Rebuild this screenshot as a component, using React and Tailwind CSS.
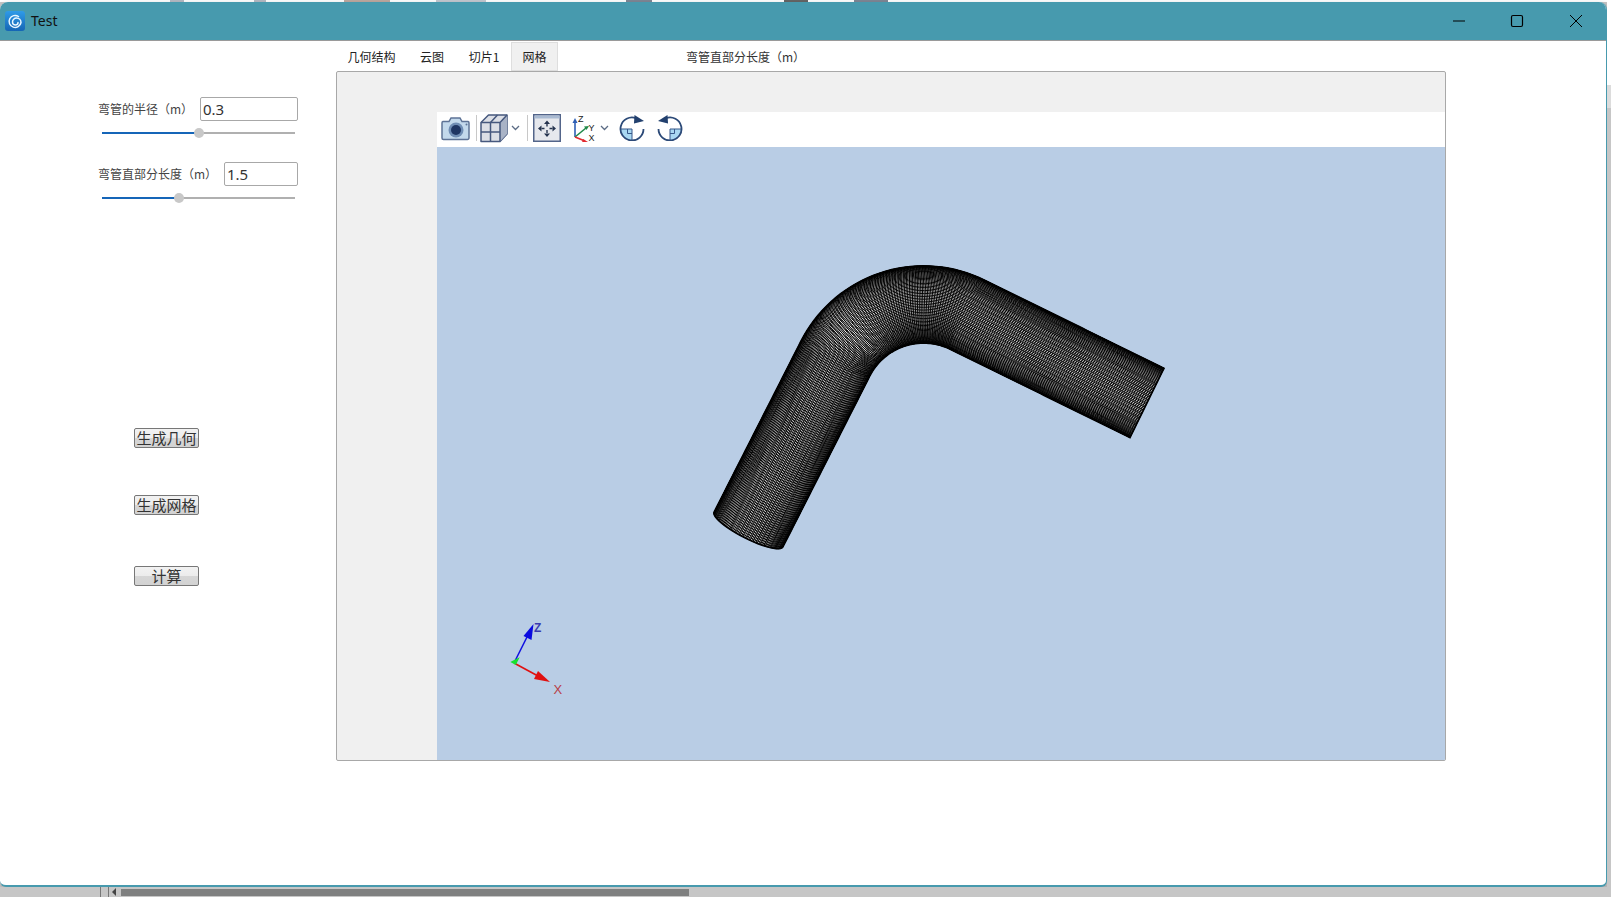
import React, { useMemo } from "react";

const CJK = "font-['Noto_Sans_CJK_SC','Noto_Sans',sans-serif]";

function tubeGeometry() {
  const L = [748.5, 529.5];
  const d1 = [0.453, -0.891];
  const d2 = [0.898, 0.441];
  const R = 99;
  const hw = 38.5;
  const len1 = 190.5;
  const len2 = 200;
  const C = [923.6, 403.5];
  const a0 = Math.atan2(L[1] + d1[1] * len1 - C[1], L[0] + d1[0] * len1 - C[0]);
  const a1 = a0 + Math.PI / 2;
  const arc = R * (a1 - a0);
  const total = len1 + arc + len2;
  const frame = (s) => {
    if (s <= len1) {
      return { p: [L[0] + d1[0] * s, L[1] + d1[1] * s], t: d1, n: [-d1[1], d1[0]] };
    }
    if (s <= len1 + arc) {
      const a = a0 + (s - len1) / R;
      const r = [Math.cos(a), Math.sin(a)];
      return { p: [C[0] + R * r[0], C[1] + R * r[1]], t: [-r[1], r[0]], n: [-r[0], -r[1]] };
    }
    const end = [C[0] + R * Math.cos(a1), C[1] + R * Math.sin(a1)];
    const q = s - len1 - arc;
    return { p: [end[0] + d2[0] * q, end[1] + d2[1] * q], t: d2, n: [-d2[1], d2[0]] };
  };
  const pt = (s, u) => {
    const f = frame(s);
    const e = 9 * (1 - s / total);
    const b = Math.sqrt(Math.max(0, 1 - u * u));
    return [
      f.p[0] + f.n[0] * hw * u - f.t[0] * e * b,
      f.p[1] + f.n[1] * hw * u - f.t[1] * e * b,
    ];
  };
  const fmt = (q, first) => (first ? "M" : "L") + q[0].toFixed(2) + " " + q[1].toFixed(2);
  let rings = "";
  const nR = 245;
  for (let i = 0; i <= nR; i++) {
    const s = (total * i) / nR;
    for (let k = 0; k <= 24; k++) {
      rings += fmt(pt(s, Math.cos((Math.PI * k) / 24)), k === 0);
    }
  }
  let longs = "";
  const nL = 76;
  for (let j = 0; j <= nL; j++) {
    const u = Math.cos((Math.PI * j) / nL);
    for (let i = 0; i <= 120; i++) {
      longs += fmt(pt((total * i) / 120, u), i === 0);
    }
  }
  let outline = "";
  for (let i = 0; i <= 120; i++) outline += fmt(pt((total * i) / 120, 1), i === 0);
  for (let k = 1; k <= 24; k++) outline += fmt(pt(total, Math.cos((Math.PI * k) / 24)));
  for (let i = 120; i >= 0; i--) outline += fmt(pt((total * i) / 120, -1));
  for (let k = 23; k >= 1; k--) outline += fmt(pt(0, Math.cos((Math.PI * k) / 24)));
  outline += "Z";
  return { rings, longs, outline };
}

function Scene() {
  const g = useMemo(tubeGeometry, []);
  return (
    <svg className="block w-full h-full" viewBox="437 147 1008 613">
      <path d={g.outline} fill="#f4f4f4" />
      <path d={g.longs} fill="none" stroke="#000" strokeWidth="0.95" />
      <path d={g.rings} fill="none" stroke="#000" strokeWidth="0.95" />
      <path d={g.outline} fill="none" stroke="#000" strokeWidth="1.800" />
      <path d="M514 663L529 633" stroke="#1010e0" strokeWidth="1.600" />
      <path d="M533.500 624L531.500 640L523.500 636Z" fill="#0a0ae0" />
      <path d="M514 663L538 676" stroke="#e01010" strokeWidth="1.600" />
      <path d="M550 682L534 679L538 671Z" fill="#e01010" />
      <path d="M512 662L518 659L515.500 664Z" fill="#18e030" stroke="#18e030" strokeWidth="1.500" />
      <text x="534" y="632" fontSize="12" fontWeight="700" fontFamily="Liberation Sans" fill="#3a3ab0">Z</text>
      <text x="553.500" y="694" fontSize="13" fontFamily="Liberation Sans" fill="#b84048">X</text>
    </svg>
  );
}

const Camera = () => (
  <svg width="30" height="26" viewBox="0 0 30 26" className="shrink-0">
    <path d="M2 6.500h6l2-3.500h9l2 3.500h6a1.500 1.500 0 0 1 1 1.500v15a1.500 1.500 0 0 1-1.500 1.500H2.500A1.500 1.500 0 0 1 1 23V8a1.500 1.500 0 0 1 1-1.500z" fill="#c3d9ec" stroke="#5e7396" strokeWidth="1.500" />
    <circle cx="15" cy="15" r="7.500" fill="#6f8db4" />
    <circle cx="15" cy="15" r="5" fill="#1e3563" />
    <circle cx="25.500" cy="9.500" r="1" fill="#5e7396" />
  </svg>
);

const Cube = () => (
  <svg width="28" height="30" viewBox="0 0 28 30" className="shrink-0">
    <path d="M1 9.500L8.500 2H27V21L20 28.500H1Z" fill="#dcdfe6" stroke="#46587e" strokeWidth="1.500" strokeLinejoin="round" />
    <path d="M20 9.500L27 2V21L20 28.500Z" fill="#a9b3c6" />
    <path d="M1 9.500H20V28.500M20 9.500L27 2" fill="none" stroke="#46587e" strokeWidth="1.500" />
    <path d="M10.500 9.500V28.500M1 19H20M10.500 9.500L17.500 2" fill="none" stroke="#46587e" strokeWidth="1.500" />
  </svg>
);

const Chevron = () => (
  <svg width="9" height="6" viewBox="0 0 9 6" className="shrink-0">
    <path d="M1 1l3.500 3.500L8 1" fill="none" stroke="#5b6c85" strokeWidth="1.300" />
  </svg>
);

const Fit = () => (
  <svg width="28" height="28" viewBox="0 0 28 28" className="shrink-0">
    <rect x="0.750" y="0.750" width="26.500" height="26.500" fill="#e6e8ed" stroke="#53658a" strokeWidth="1.500" />
    <rect x="1.500" y="1.500" width="25" height="3" fill="#a9bad2" />
    <path d="M14 9.500v3M14 16v3M8.500 14.500h3M16.500 14.500h3" stroke="#26344f" strokeWidth="1.400" />
    <path d="M14 6.500l-3 3.500h6zM14 23l-3-3.500h6zM5 14.500l3.500-3v6zM23 14.500l-3.500-3v6z" fill="#26344f" />
  </svg>
);

const AxesIcon = () => (
  <svg width="24" height="28" viewBox="0 0 24 28" className="shrink-0">
    <path d="M4 23V7" stroke="#2f5fb5" strokeWidth="1.600" />
    <path d="M4 4l-2.500 5h5z" fill="#2f5fb5" />
    <path d="M4 23L15 14" stroke="#218a4a" strokeWidth="1.600" />
    <path d="M18 12l-5 .5 2.500 3.500z" fill="#218a4a" />
    <path d="M4 23L14 27" stroke="#e22a30" strokeWidth="1.600" />
    <path d="M17 28l-5-3-1 3.500z" fill="#e22a30" />
    <text x="7" y="8" fontSize="9" fontFamily="Liberation Sans" fill="#222">Z</text>
    <text x="17.500" y="17" fontSize="9" fontFamily="Liberation Sans" fill="#222">Y</text>
    <text x="17.500" y="27" fontSize="9" fontFamily="Liberation Sans" fill="#222">X</text>
  </svg>
);

const Rotate = ({ flip }) => (
  <svg width="26" height="26" viewBox="0 0 26 26" className={flip ? "shrink-0 -scale-x-100" : "shrink-0"}>
    <path d="M1.500 14H13V25.500A11.500 11.500 0 0 1 1.500 14Z" fill="#a9d8f2" />
    <path d="M1.500 14H13V25.500M8.500 14v4.500H13" fill="none" stroke="#37598a" strokeWidth="1" />
    <path d="M24.500 14A11.500 11.500 0 1 1 17 3.200" fill="none" stroke="#2c4a78" strokeWidth="1.800" />
    <path d="M15.500 0L25 6L15 8.500Z" fill="#22406e" />
  </svg>
);

function Slider({ fill, rest, left }) {
  return (
    <div className="flex items-center w-[193px] h-[12px] ml-[4px] relative">
      <div className={`h-[2px] bg-[#1565b8] ${fill}`} />
      <div className={`h-[2px] bg-[#b0b0b0] ${rest}`} />
      <div className={`absolute top-[1px] w-[10px] h-[10px] rounded-full bg-[#c8c8c8] ${left}`} />
    </div>
  );
}

function Field({ label, value, inputW }) {
  return (
    <div className="flex items-center h-[24px]">
      <span className="text-[12px] leading-none text-[#444] whitespace-nowrap">{label}</span>
      <div className={`${inputW} h-[24px] ml-auto border border-[#a8a8a8] rounded-[2px] pl-[2px] text-[15px] leading-[22px] text-[#333] font-['Noto_Sans',sans-serif]`}>{value}</div>
    </div>
  );
}

function Btn({ children, cls }) {
  return (
    <button className={`block w-[65px] h-[20px] ml-[36px] border border-[#777] rounded-[2px] bg-[linear-gradient(#f2f2f2_0%,#ececec_48%,#d6d6d6_52%,#d2d2d2_100%)] text-[15px] leading-[16px] text-[#333] text-center whitespace-nowrap ${cls}`}>
      {children}
    </button>
  );
}

function Tab({ children, active, cls }) {
  return (
    <div className={`h-[29px] flex items-center justify-center text-[12px] leading-none text-[#222] whitespace-nowrap ${active ? "bg-[#f0f0f0] border border-[#dedede]" : ""} ${cls}`}>
      {children}
    </div>
  );
}

export default function App() {
  return (
    <div className={`w-[1611px] h-[897px] overflow-hidden bg-[#c6c6c6] flex flex-col ${CJK}`}>
      <div className="flex flex-1 min-h-0">
        <div className="w-[1607px] flex flex-col">
          <div className="h-[2px] bg-white flex items-center shrink-0">
            <div className="w-[170px]" />
            <div className="w-[14px] h-[2px] bg-[#b5bac4]" />
            <div className="w-[70px]" />
            <div className="w-[12px] h-[2px] bg-[#b5bac4]" />
            <div className="w-[78px]" />
            <div className="w-[46px] h-[2px] bg-[#c0a9a0]" />
            <div className="w-[46px]" />
            <div className="w-[50px] h-[2px] bg-[#c4c8d0]" />
            <div className="w-[140px]" />
            <div className="w-[26px] h-[2px] bg-[#7f8796]" />
            <div className="w-[132px]" />
            <div className="w-[24px] h-[2px] bg-[#666]" />
            <div className="w-[46px]" />
            <div className="w-[34px] h-[2px] bg-[#7f8796]" />
          </div>
          <div className="flex-1 min-h-0 flex flex-col bg-white rounded-t-[8px] rounded-b-[6px] border-b-2 border-r border-[#479aae] shadow-[1px_2px_6px_rgba(0,0,0,0.2)] overflow-hidden">
            <div className="h-[39px] shrink-0 bg-[#479aae] border-b border-[#9a9a9a] flex items-center font-['Noto_Sans',sans-serif] text-[14px] text-[#111]">
              <div className="ml-[5px] w-[20px] h-[20px] rounded-[3px] bg-[linear-gradient(#2f9be8,#1565b5)] flex items-center justify-center">
                <svg width="16" height="16" viewBox="0 0 16 16">
                  <path d="M11.500 3.500A6 6 0 1 0 14 9.500C14 7 12 5 9.500 5A4 4 0 0 0 5.500 9c0 1.800 1.500 3 3 3s2.500-1 2.500-2.500" fill="none" stroke="#e8f6ff" strokeWidth="1.500" strokeLinecap="round" />
                </svg>
              </div>
              <span className="ml-[6px] leading-none">Test</span>
              <div className="ml-auto flex items-center text-black">
                <svg width="14" height="14" viewBox="0 0 14 14" className="mr-[44px]"><path d="M1 7h12" stroke="#000" strokeWidth="1" /></svg>
                <svg width="14" height="14" viewBox="0 0 14 14" className="mr-[45px]"><rect x="1.500" y="1.500" width="11" height="11" rx="1.500" fill="none" stroke="#000" strokeWidth="1.200" /></svg>
                <svg width="14" height="14" viewBox="0 0 14 14" className="mr-[23px]"><path d="M1 1l12 12M13 1L1 13" stroke="#000" strokeWidth="1" /></svg>
              </div>
            </div>
            <div className="flex-1 min-h-0 flex">
              <div className="w-[336px] shrink-0 pl-[98px] pr-[38px] pt-[56px]">
                <Field label="弯管的半径（m）" value="0.3" inputW="w-[98px]" />
                <div className="mt-[6px]"><Slider fill="w-[97px]" rest="w-[96px]" left="left-[92px]" /></div>
                <div className="mt-[23px]">
                  <Field label="弯管直部分长度（m）" value="1.5" inputW="w-[74px]" />
                </div>
                <div className="mt-[6px]"><Slider fill="w-[77px]" rest="w-[116px]" left="left-[72px]" /></div>
                <div className="mt-[224px]">
                  <Btn>生成几何</Btn>
                  <Btn cls="mt-[47px]">生成网格</Btn>
                  <Btn cls="mt-[51px]">计算</Btn>
                </div>
              </div>
              <div className="w-[1110px] shrink-0 flex flex-col">
                <div className="h-[30px] shrink-0 flex items-start pt-[1px]">
                  <Tab cls="w-[71px]">几何结构</Tab>
                  <Tab cls="w-[50px]">云图</Tab>
                  <Tab cls="w-[54px]">切片1</Tab>
                  <Tab active cls="w-[47px]">网格</Tab>
                  <Tab cls="ml-[128px] text-[#333]">弯管直部分长度（m）</Tab>
                </div>
                <div className="flex-1 flex border border-[#a8a8a8] rounded-[2px] bg-[#f0f0f0] mb-[124px] overflow-hidden">
                  <div className="w-[100px] shrink-0" />
                  <div className="flex-1 flex flex-col pt-[40px]">
                    <div className="h-[35px] shrink-0 bg-white flex items-center pl-[4px] pb-[4px]">
                      <Camera />
                      <div className="w-px h-[26px] bg-[#c8c8c8] ml-[5px] mr-[3px]" />
                      <Cube />
                      <div className="ml-[3px]"><Chevron /></div>
                      <div className="w-px h-[26px] bg-[#c8c8c8] ml-[7px] mr-[5px]" />
                      <Fit />
                      <div className="ml-[10px]"><AxesIcon /></div>
                      <div className="ml-[5px]"><Chevron /></div>
                      <div className="ml-[10px]"><Rotate /></div>
                      <div className="ml-[12px]"><Rotate flip /></div>
                    </div>
                    <div className="flex-1 min-h-0 bg-[#b9cde5]">
                      <Scene />
                    </div>
                  </div>
                </div>
              </div>
            </div>
          </div>
        </div>
        <div className="w-[4px] flex flex-col">
          <div className="h-[85px] bg-white" />
          <div className="h-[23px] bg-[#dcdcdc]" />
          <div className="flex-1 bg-[#c6c6c6]" />
        </div>
      </div>
      <div className="h-[10px] shrink-0 flex items-center bg-[#c6c6c6]">
        <div className="ml-[100px] w-[9px] h-[10px] border-x border-[#777]" />
        <div className="ml-[3px] w-0 h-0 border-y-[4px] border-y-transparent border-r-[4px] border-r-[#444]" />
        <div className="ml-[5px] w-[568px] h-[7px] bg-[#7f8080]" />
      </div>
    </div>
  );
}
